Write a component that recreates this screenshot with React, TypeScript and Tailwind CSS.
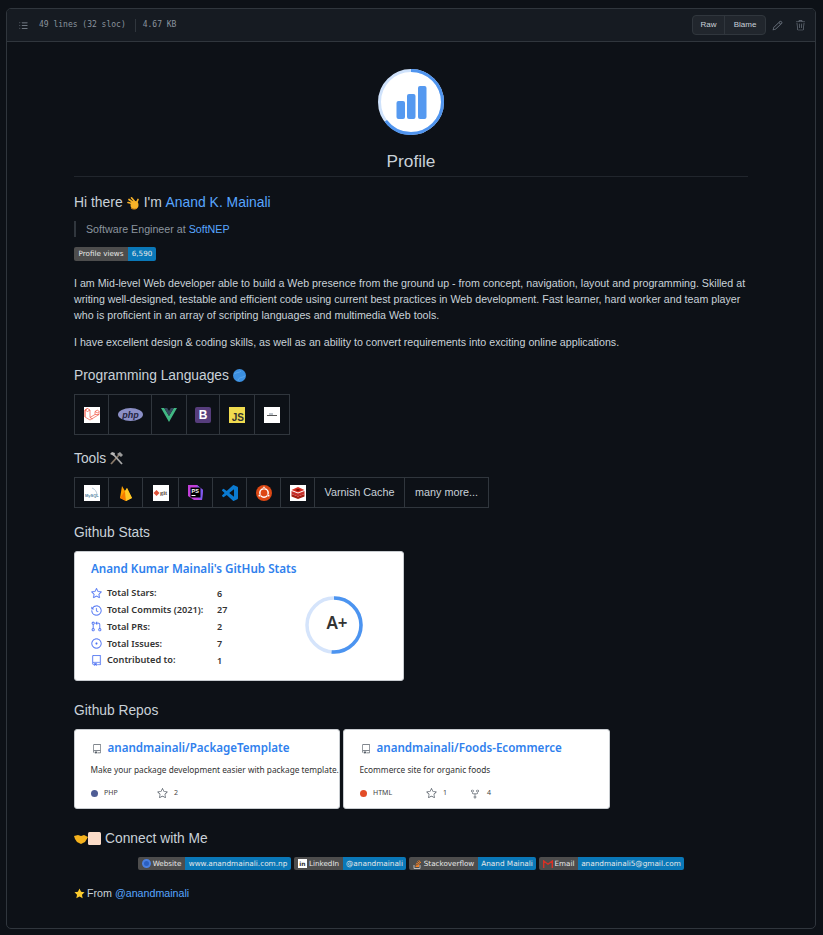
import type { ReactNode } from "react";
import {
  GoGitPullRequest,
  GoHistory,
  GoIssueOpened,
  GoListUnordered,
  GoPencil,
  GoRepo,
  GoRepoForked,
  GoStar,
  GoTrash,
} from "react-icons/go";

function Cell({ children, className = "" }: { children: ReactNode; className?: string }) {
  return <td className={`border border-[#30363d] align-middle ${className}`}>{children}</td>;
}

function IconBox({ children }: { children: ReactNode }) {
  return <div className="flex justify-center">{children}</div>;
}

function Badge({
  icon,
  label,
  value,
  lw,
  rw,
}: {
  icon?: ReactNode;
  label: string;
  value: string;
  lw: string;
  rw: string;
}) {
  return (
    <span className="inline-flex h-[13px] overflow-hidden rounded-[2px] font-['DejaVu_Sans',sans-serif] text-[7.2px] leading-none text-[#e8e8e8]">
      <span className={`flex ${lw} items-center justify-center gap-[2px] bg-[#4d4d4d]`}>
        {icon}
        {label}
      </span>
      <span className={`flex ${rw} items-center justify-center bg-[#0a78b8] text-[7.3px]`}>{value}</span>
    </span>
  );
}

function Heading({ children, className }: { children: ReactNode; className: string }) {
  return <h3 className={`text-[13.8px] leading-[17px] font-normal text-[#c9d1d9] ${className}`}>{children}</h3>;
}

function StatRow({ icon, label, value }: { icon: ReactNode; label: string; value: string }) {
  return (
    <div className="flex h-[16.75px] items-center">
      <span className="flex w-[16px] text-[#4c71f2]">{icon}</span>
      <span className="w-[110px] text-[9.2px] font-semibold text-[#333]">{label}</span>
      <span className="text-[9px] font-semibold text-[#333]">{value}</span>
    </div>
  );
}

function RepoCard({
  name,
  desc,
  lang,
  dot,
  stars,
  forks,
  starGap,
  w,
}: {
  name: string;
  desc: string;
  lang: string;
  dot: string;
  stars: string;
  forks?: string;
  starGap: string;
  w: string;
}) {
  return (
    <div className={`${w} h-[80px] rounded-[3px] border border-[#c8ccd0] bg-white pl-[15.5px] font-['Noto_Sans',sans-serif]`}>
      <div className="mt-[9px] flex items-center gap-[6px] text-[#586069]">
        <GoRepo className="mt-[2px] ml-[1px] size-[10px]" />
        <span className="text-[11.6px] leading-[17px] font-semibold text-[#2f80ed]">{name}</span>
      </div>
      <p className="mt-[7px] text-[8.3px] leading-[14px] whitespace-nowrap text-[#333]">{desc}</p>
      <div className="mt-[11px] flex items-center text-[7px] text-[#444]">
        <span className={`size-[7.5px] rounded-full ${dot}`} />
        <span className={`ml-[6px] ${starGap}`}>{lang}</span>
        <GoStar className="size-[11px] text-[#586069]" />
        <span className="ml-[6px]">{stars}</span>
        {forks && (
          <>
            <GoRepoForked className="ml-[23px] size-[10px] text-[#586069]" />
            <span className="ml-[7px]">{forks}</span>
          </>
        )}
      </div>
    </div>
  );
}

export default function App() {
  return (
    <div className="min-h-[935px] bg-[#0d1117] px-[6px] pt-[8px] font-['Liberation_Sans',sans-serif] text-[#c9d1d9]">
      <div className="h-[921px] w-[810px] overflow-hidden rounded-[5px] border border-[#30363d]">
        <div className="flex h-[33px] items-center border-b border-[#30363d] bg-[#161b22] pr-[9px] pl-[11px] text-[#8b949e]">
          <GoListUnordered className="size-[11px]" />
          <span className="ml-[10px] font-['DejaVu_Sans_Mono',monospace] text-[8px]">49 lines (32 sloc)</span>
          <span className="mr-[7px] ml-[9px] h-[13px] w-px bg-[#30363d]" />
          <span className="font-['DejaVu_Sans_Mono',monospace] text-[8px]">4.67 KB</span>
          <div className="ml-auto flex h-[20px] items-center rounded-[4px] border border-[#30363d] bg-[#21262d] text-[8px] text-[#c9d1d9]">
            <span className="flex h-full w-[32px] items-center justify-center border-r border-[#30363d]">Raw</span>
            <span className="flex h-full w-[40px] items-center justify-center">Blame</span>
          </div>
          <GoPencil className="ml-[6px] size-[11px] text-[#6e7681]" />
          <GoTrash className="ml-[12px] size-[11px] text-[#6e7681]" />
        </div>

        <div className="px-[67px] pt-[27px]">
          <div className="flex justify-center">
            <svg width="66" height="66" viewBox="0 0 66 66">
              <circle cx="33" cy="33" r="31" fill="#fff" />
              <circle cx="33" cy="33" r="31.5" fill="none" stroke="#cfe2fb" strokeWidth="3" />
              <circle
                cx="33"
                cy="33"
                r="31.5"
                fill="none"
                stroke="#4f94ee"
                strokeWidth="3"
                strokeDasharray="128 198"
                transform="rotate(-90 33 33)"
              />
              <rect x="18.5" y="32" width="8.5" height="18" rx="2" fill="#5599f0" />
              <rect x="29" y="25" width="8.5" height="25" rx="2" fill="#5599f0" />
              <rect x="40" y="17" width="8.5" height="33" rx="2" fill="#5599f0" />
            </svg>
          </div>
          <h1 className="mt-[16px] border-b border-[#21262d] pb-[5px] text-center text-[17.3px] leading-[20px] font-normal text-[#c9d1d9]">
            Profile
          </h1>

          <h2 className="mt-[17px] flex items-center text-[13.9px] leading-[17px] font-normal">
            Hi there
            <svg className="mx-[3.5px]" width="14" height="14" viewBox="0 0 14 14">
              <g stroke="#f7b228" strokeLinecap="round" fill="none">
                <path d="M8 8 2 6.500" strokeWidth="1.700" />
                <path d="M8 7 3 3.500" strokeWidth="1.700" />
                <path d="M9 6 5.500 1.800" strokeWidth="1.700" />
                <path d="M10.500 7 12 3.500" strokeWidth="1.700" />
              </g>
              <circle cx="8.500" cy="9" r="4" fill="#f7b228" />
              <path d="M5 12c1.500 1.300 4 1.500 6 .3" stroke="#d98a12" fill="none" />
            </svg>
            I'm&nbsp;<a className="text-[#58a6ff]">Anand K. Mainali</a>
          </h2>
          <blockquote className="mt-[10px] border-l-2 border-[#30363d] pl-[10px] text-[10.68px] leading-[16px] text-[#8b949e]">
            Software Engineer at <a className="text-[#58a6ff]">SoftNEP</a>
          </blockquote>

          <div className="mt-[10px] flex h-[14px]">
            <span className="inline-flex h-[14px] overflow-hidden rounded-[2px] font-['DejaVu_Sans',sans-serif] text-[7.2px] leading-none text-[#e8e8e8]">
              <span className="flex w-[54px] items-center justify-center bg-[#4d4d4d]">Profile views</span>
              <span className="flex w-[28px] items-center justify-center bg-[#0a78b8]">6,590</span>
            </span>
          </div>

          <p className="mt-[14px] text-[10.68px] leading-[16px]">
            I am Mid-level Web developer able to build a Web presence from the ground up - from concept, navigation,
            layout and programming. Skilled at writing well-designed, testable and efficient code using current best
            practices in Web development. Fast learner, hard worker and team player who is proficient in an array of
            scripting languages and multimedia Web tools.
          </p>
          <p className="mt-[11px] text-[10.68px] leading-[16px]">
            I have excellent design &amp; coding skills, as well as an ability to convert requirements into exciting
            online applications.
          </p>

          <Heading className="mt-[17px] flex items-center gap-[4px]">
            Programming Languages
            <svg width="13" height="13" viewBox="0 0 13 13">
              <circle cx="6.500" cy="6.500" r="6.500" fill="#3b8fe0" />
              <path d="M1 5c3-2 5-1 7-3M5 12c0-4 4-3 7-5" stroke="#6fb3ee" strokeWidth="0.6" fill="none" />
            </svg>
          </Heading>
          <table className="mt-[10px] table-fixed border-collapse">
            <tbody>
              <tr className="h-[40px]">
                <Cell className="w-[34px]">
                  <IconBox>
                    <svg width="16" height="16" viewBox="0 0 16 16" className="block">
                      <rect width="16" height="16" fill="#fff" />
                      <path
                        d="M1 3 3.500 1.500 6 3v7.500l5-3V4.500L13.500 3 15 4.500v3L6 13l-5-3zM1 3v7M6 10.500 8.500 12M11 7.500l4 0M11 4.500l2.500 1.500 1.500-1.500M3.500 1.500 1 3l2.500 1.500L6 3"
                        fill="none"
                        stroke="#f0513f"
                        strokeWidth="0.7"
                      />
                    </svg>
                  </IconBox>
                </Cell>
                <Cell className="w-[43px]">
                  <IconBox>
                    <svg width="25" height="13" viewBox="0 0 25 13" className="block">
                      <ellipse cx="12.500" cy="6.500" rx="12.500" ry="6.500" fill="#8b8fc6" />
                      <text x="12.500" y="9.500" textAnchor="middle" fontFamily="Liberation Sans" fontStyle="italic" fontWeight="700" fontSize="9" fill="#23243f">
                        php
                      </text>
                    </svg>
                  </IconBox>
                </Cell>
                <Cell className="w-[35px]">
                  <IconBox>
                    <svg width="16" height="14" viewBox="0 0 16 14" className="block">
                      <path d="M0 0h3.200L8 8l4.800-8H16L8 14z" fill="#41b883" />
                      <path d="M3.200 0h3L8 3l1.800-3h3L8 8z" fill="#35495e" />
                    </svg>
                  </IconBox>
                </Cell>
                <Cell className="w-[33px]">
                  <IconBox>
                    <span className="flex size-[16px] items-center justify-center rounded-[2px] bg-[#563d7c] text-[12px] leading-none font-bold text-white">
                      B
                    </span>
                  </IconBox>
                </Cell>
                <Cell className="w-[35px]">
                  <IconBox>
                    <span className="flex size-[16px] items-end justify-end bg-[#f0db4f] pr-[1px] text-[10px] leading-[10px] font-bold text-[#323330]">
                      JS
                    </span>
                  </IconBox>
                </Cell>
                <Cell className="w-[35px]">
                  <IconBox>
                    <svg width="16" height="16" viewBox="0 0 16 16" className="block">
                      <rect width="16" height="16" fill="#fff" />
                      <path d="M3 8.500h10" stroke="#555" strokeWidth="1" />
                      <path d="M5 7h4" stroke="#7a8a9a" strokeWidth="1" />
                    </svg>
                  </IconBox>
                </Cell>
              </tr>
            </tbody>
          </table>

          <Heading className="mt-[15px] flex items-center gap-[3px]">
            Tools
            <svg width="15" height="15" viewBox="0 0 15 15">
              <path d="M2 13 10 4" stroke="#8a7a6a" strokeWidth="1.800" />
              <path d="M13 13 4 3" stroke="#a8a8a8" strokeWidth="1.800" />
              <path d="M8 3l3-2 3 3-2 2z" fill="#9a9a9a" />
              <path d="M1 3l2-2 3 1-1 3z" fill="#b8b8b8" />
            </svg>
          </Heading>
          <table className="mt-[10px] table-fixed border-collapse text-[10.8px]">
            <tbody>
              <tr className="h-[30px]">
                <Cell className="w-[34px]">
                  <IconBox>
                    <svg width="16" height="16" viewBox="0 0 16 16" className="block">
                      <rect width="16" height="16" fill="#fff" />
                      <path d="M8 3c3 1 5 4 5 7" stroke="#b5c8d6" fill="none" />
                      <text x="1" y="12" fontSize="4" fontWeight="700" fontFamily="Liberation Sans" fill="#4d7f9f">
                        MySQL
                      </text>
                    </svg>
                  </IconBox>
                </Cell>
                <Cell className="w-[34px]">
                  <IconBox>
                    <svg width="16" height="16" viewBox="0 0 16 16" className="block">
                      <path d="M2 13 4 1l3 5 2-3 5 10-6 3z" fill="#ffa000" />
                      <path d="M7 6 2 13l6 3z" fill="#f57c00" />
                      <path d="M9 3 7 6l1 10 6-3z" fill="#ffca28" />
                    </svg>
                  </IconBox>
                </Cell>
                <Cell className="w-[36px]">
                  <IconBox>
                    <svg width="16" height="16" viewBox="0 0 16 16" className="block">
                      <rect width="16" height="16" fill="#fff" />
                      <path d="M3.500 5 6.500 8 3.500 11 .5 8z" fill="#e0533a" />
                      <text x="7" y="10" fontSize="6.500" fontWeight="700" fontFamily="Liberation Serif" fill="#5a4a3a">
                        git
                      </text>
                    </svg>
                  </IconBox>
                </Cell>
                <Cell className="w-[34px]">
                  <IconBox>
                    <svg width="17" height="17" viewBox="0 0 17 17" className="block">
                      <path d="M1 1l9 0 6 5-1 10-8 0-6-4z" fill="#c13fd8" />
                      <path d="M10 1l6 5-1 10-4-2z" fill="#7a5bf0" />
                      <rect x="3.500" y="3.500" width="10" height="10" fill="#000" />
                      <text x="4.500" y="9" fontSize="5.500" fontWeight="700" fontFamily="Liberation Sans" fill="#fff">
                        PS
                      </text>
                      <rect x="4.500" y="11" width="4" height="1" fill="#fff" />
                    </svg>
                  </IconBox>
                </Cell>
                <Cell className="w-[34px]">
                  <IconBox>
                    <svg width="16" height="16" viewBox="0 0 24 24" className="block">
                      <path
                        d="M23.150 2.587 18.210.21a1.494 1.494 0 0 0-1.705.29l-9.460 8.630-4.120-3.128a.999.999 0 0 0-1.276.057L.327 7.261A1 1 0 0 0 .326 8.740L3.899 12 .326 15.260a1 1 0 0 0 .001 1.479L1.650 17.940a.999.999 0 0 0 1.276.057l4.120-3.128 9.460 8.630a1.492 1.492 0 0 0 1.704.290l4.942-2.377A1.500 1.500 0 0 0 24 20.060V3.939a1.500 1.500 0 0 0-.850-1.352zm-5.146 14.861L10.826 12l7.178-5.448v10.896z"
                        fill="#0a7ad1"
                      />
                    </svg>
                  </IconBox>
                </Cell>
                <Cell className="w-[34px]">
                  <IconBox>
                    <span className="flex size-[16px] items-center justify-center rounded-full bg-[#dd4814]">
                      <svg width="14" height="14" viewBox="0 0 14 14">
                        <circle cx="7" cy="7" r="4.200" fill="none" stroke="#fff" strokeWidth="1.500" />
                        <circle cx="7" cy="1.800" r="1.200" fill="#fff" stroke="#dd4814" strokeWidth="0.5" />
                        <circle cx="2.500" cy="9.600" r="1.200" fill="#fff" stroke="#dd4814" strokeWidth="0.5" />
                        <circle cx="11.500" cy="9.600" r="1.200" fill="#fff" stroke="#dd4814" strokeWidth="0.5" />
                      </svg>
                    </span>
                  </IconBox>
                </Cell>
                <Cell className="w-[34px]">
                  <IconBox>
                    <svg width="16" height="16" viewBox="0 0 16 16" className="block">
                      <rect width="16" height="16" fill="#fff" />
                      <path d="M1.500 9 8 11.500 14.500 9v2.500L8 14l-6.500-2.500z" fill="#a41e11" />
                      <path d="M1.500 6 8 8.500 14.500 6v3L8 11.500 1.500 9z" fill="#c6302b" />
                      <path d="M1.500 5 8 2l6.500 3L8 7.500z" fill="#d82c20" />
                      <path d="M5 5l3-1 3 1-3 1z" fill="#7a0c00" />
                    </svg>
                  </IconBox>
                </Cell>
                <Cell className="w-[90px] text-center">Varnish Cache</Cell>
                <Cell className="w-[84px] text-center">many more...</Cell>
              </tr>
            </tbody>
          </table>

          <Heading className="mt-[16px]">Github Stats</Heading>
          <div className="mt-[10px] h-[130px] w-[330px] rounded-[3px] border border-[#c8ccd0] bg-white pt-[8px] pl-[16px] font-['Noto_Sans',sans-serif]">
            <div className="text-[11.67px] leading-[17px] font-semibold text-[#2f80ed]">
              Anand Kumar Mainali's GitHub Stats
            </div>
            <div className="mt-[8px] flex items-start">
              <div className="w-[213px] flex-none">
                <StatRow icon={<GoStar className="size-[11px] stroke-current stroke-[0.4]" />} label="Total Stars:" value="6" />
                <StatRow icon={<GoHistory className="size-[11px] stroke-current stroke-[0.4]" />} label="Total Commits (2021):" value="27" />
                <StatRow icon={<GoGitPullRequest className="size-[11px] stroke-current stroke-[0.4]" />} label="Total PRs:" value="2" />
                <StatRow icon={<GoIssueOpened className="size-[11px] stroke-current stroke-[0.4]" />} label="Total Issues:" value="7" />
                <StatRow icon={<GoRepo className="size-[11px] stroke-current stroke-[0.4]" />} label="Contributed to:" value="1" />
              </div>
              <svg className="mt-[10px] flex-none" width="60" height="60" viewBox="0 0 60 60">
                <circle cx="30" cy="30" r="27" fill="none" stroke="#d5e4fb" strokeWidth="3.500" />
                <circle
                  cx="30"
                  cy="30"
                  r="27"
                  fill="none"
                  stroke="#4c94f0"
                  strokeWidth="3.500"
                  strokeDasharray="87 170"
                  transform="rotate(-90 30 30)"
                />
                <text x="33" y="34" textAnchor="middle" fontFamily="Noto Sans" fontWeight="600" fontSize="17" fill="#333">
                  A+
                </text>
              </svg>
            </div>
          </div>

          <Heading className="mt-[21px]">Github Repos</Heading>
          <div className="mt-[10px] flex gap-[3px]">
            <RepoCard
              w="w-[266px]"
              name="anandmainali/PackageTemplate"
              desc="Make your package development easier with package template."
              lang="PHP"
              dot="bg-[#4f5d95]"
              stars="2"
              starGap="w-[53px]"
            />
            <RepoCard
              w="w-[267px]"
              name="anandmainali/Foods-Ecommerce"
              desc="Ecommerce site for organic foods"
              lang="HTML"
              dot="bg-[#e34c26]"
              stars="1"
              forks="4"
              starGap="w-[53px]"
            />
          </div>

          <Heading className="mt-[21px] flex items-center">
            <svg width="14" height="12" viewBox="0 0 14 12">
              <path d="M0 3 4 2l3 1 3-1 4 2-3 5-4 2-4-2-2-3z" fill="#f5b21d" />
            </svg>
            <svg width="13" height="13" viewBox="0 0 13 13">
              <rect width="13" height="13" rx="1.500" fill="#fbdcc8" />
            </svg>
            <span className="ml-[4px]">Connect with Me</span>
          </Heading>
          <div className="mt-[10px] flex justify-center gap-[3px]">
            <Badge
              label="Website"
              value="www.anandmainali.com.np"
              lw="w-[47px]"
              rw="w-[106px]"
              icon={<span className="size-[9px] rounded-full border-2 border-[#4a7fe0] bg-[#2b5fc0]" />}
            />
            <Badge
              label="LinkedIn"
              value="@anandmainali"
              lw="w-[49px]"
              rw="w-[63px]"
              icon={<span className="flex size-[9px] items-center justify-center bg-white text-[6px] font-bold text-[#333]">in</span>}
            />
            <Badge
              label="Stackoverflow"
              value="Anand Mainali"
              lw="w-[69px]"
              rw="w-[58px]"
              icon={
                <svg width="9" height="10" viewBox="0 0 9 10">
                  <path d="M1 6v3.500h6V6" stroke="#bcbbbb" fill="none" />
                  <path d="M2.500 7.500h3.500M2.700 6l3.400.6M3.200 4.200l3.200 1.400M4.300 2.600l2.800 2M5.800 1.300 7.800 4" stroke="#f48024" />
                </svg>
              }
            />
            <Badge
              label="Email"
              value="anandmainali5@gmail.com"
              lw="w-[39px]"
              rw="w-[106px]"
              icon={
                <svg width="10" height="8" viewBox="0 0 10 8">
                  <path d="M0.700 8V1l4.300 3.200L9.300 1v7" fill="none" stroke="#d93025" strokeWidth="1.400" />
                </svg>
              }
            />
          </div>

          <p className="mt-[15px] flex items-center text-[10.68px] leading-[16px]">
            <svg width="11" height="11" viewBox="0 0 24 24" className="mr-[2px]">
              <path d="M12 1l3.400 7.300 7.600.9-5.600 5.400 1.500 7.900L12 18.700 5.100 22.500l1.500-7.900L1 9.200l7.600-.9z" fill="#fbcb2e" />
            </svg>
            From&nbsp;<a className="text-[#58a6ff]">@anandmainali</a>
          </p>
        </div>
      </div>
    </div>
  );
}
